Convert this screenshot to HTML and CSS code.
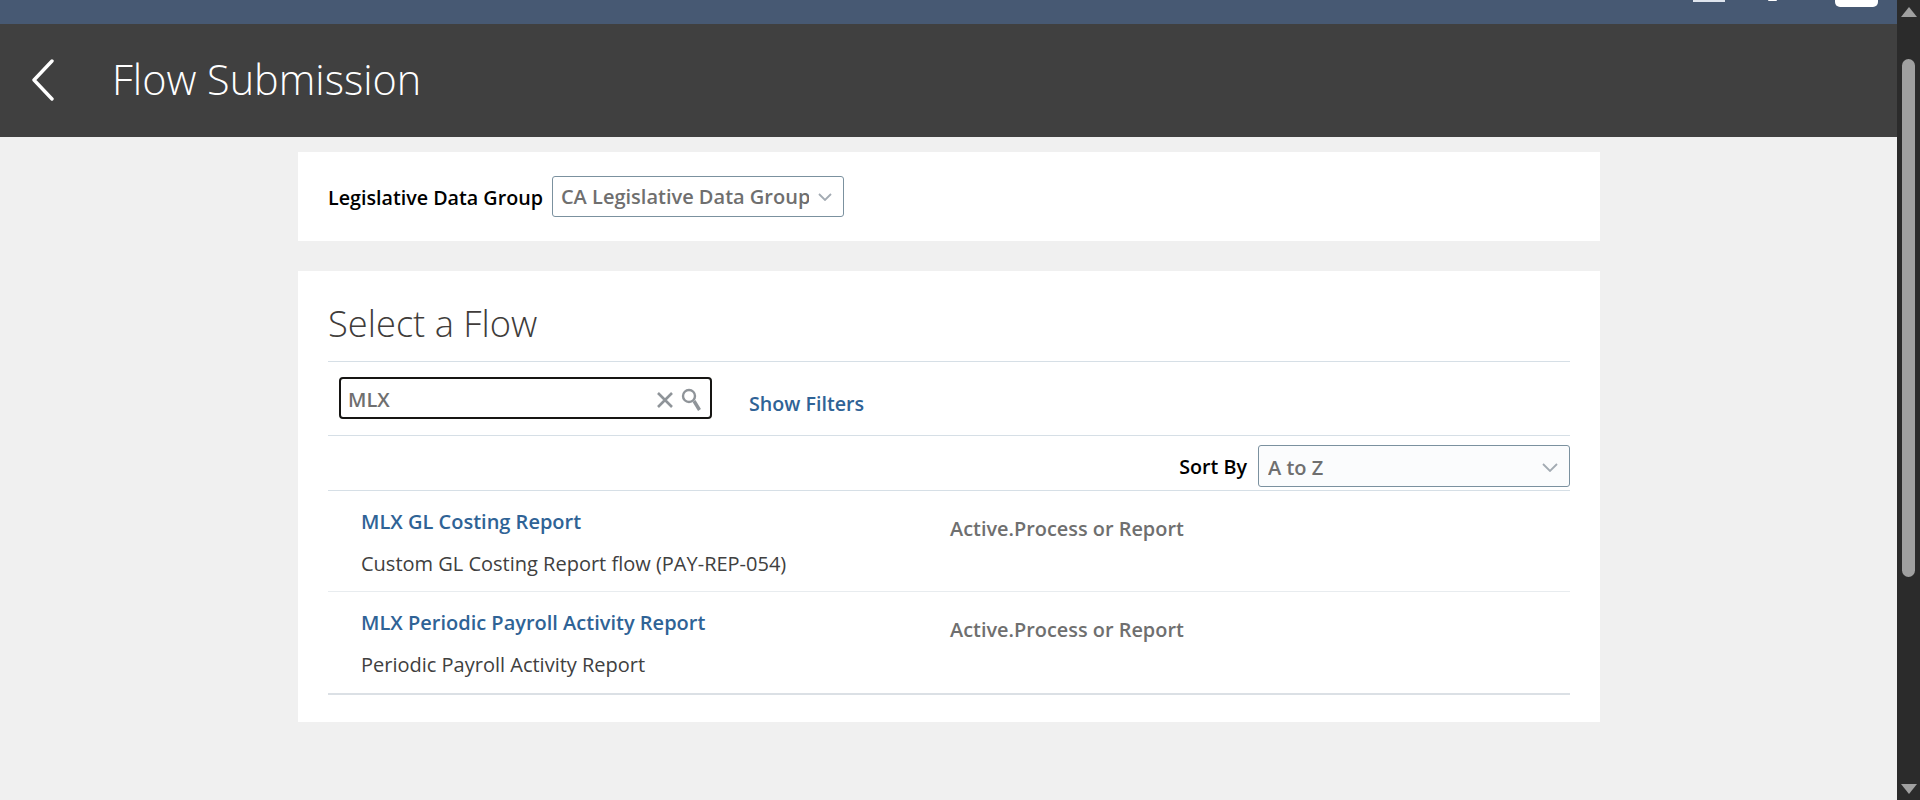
FILE: index.html
```html
<!DOCTYPE html>
<html lang="en">
<head>
    <meta charset="UTF-8">
    <title>Flow Submission</title>
    <link rel="stylesheet" href="styles.css">
</head>
<body>
    <div class="page">
        <div class="content">
            <div class="topbar">
                <span class="top-tab"></span>
                <span class="top-dot"></span>
                <span class="top-btn"></span>
            </div>

            <header class="title-bar">
                <svg class="back-icon" width="24" height="42" viewBox="0 0 24 42">
                    <path d="M21 2 L3 21 L21 40" fill="none" stroke="#fff" stroke-width="3.4" stroke-linecap="round" stroke-linejoin="round"/>
                </svg>
                <h1>Flow Submission</h1>
            </header>

            <main>
                <section class="card ldg-card">
                    <label class="field-label">Legislative Data Group</label>
                    <div class="select ldg-select">
                        <span class="select-text">CA Legislative Data Group</span>
                        <svg class="chevron" width="14" height="8" viewBox="0 0 14 8"><path d="M1 1 L7 7 L13 1" fill="none" stroke="#a3abb3" stroke-width="1.8"/></svg>
                    </div>
                </section>

                <section class="card flow-card">
                    <h2>Select a Flow</h2>

                    <div class="search-row">
                        <div class="search-box">
                            <span class="search-text">MLX</span>
                            <svg class="clear-icon" width="18" height="18" viewBox="0 0 18 18"><path d="M2 2 L16 16 M16 2 L2 16" stroke="#8f9499" stroke-width="2.6"/></svg>
                            <svg class="search-icon" width="20" height="26" viewBox="0 0 20 26">
                                <circle cx="8" cy="8" r="6" fill="none" stroke="#8f9499" stroke-width="2.4"/>
                                <path d="M13 13 L18.5 22" stroke="#8f9499" stroke-width="3.4"/>
                            </svg>
                        </div>
                        <a class="filters-link" href="#">Show Filters</a>
                    </div>

                    <div class="sort-row">
                        <label class="field-label sort-label">Sort By</label>
                        <div class="select sort-select">
                            <span class="select-text">A to Z</span>
                            <svg class="chevron" width="16" height="9" viewBox="0 0 16 9"><path d="M1 1 L8 8 L15 1" fill="none" stroke="#a3abb3" stroke-width="1.8"/></svg>
                        </div>
                    </div>

                    <div class="flow-row">
                        <div class="flow-main">
                            <a class="flow-name" href="#">MLX GL Costing Report</a>
                            <p class="flow-desc">Custom GL Costing Report flow (PAY-REP-054)</p>
                        </div>
                        <div class="flow-status">Active.Process or Report</div>
                    </div>

                    <div class="flow-row last">
                        <div class="flow-main">
                            <a class="flow-name" href="#">MLX Periodic Payroll Activity Report</a>
                            <p class="flow-desc">Periodic Payroll Activity Report</p>
                        </div>
                        <div class="flow-status">Active.Process or Report</div>
                    </div>
                </section>
            </main>
        </div>

        <div class="scrollbar">
            <span class="arrow-up"></span>
            <span class="thumb"></span>
            <span class="arrow-down"></span>
        </div>
    </div>
</body>
</html>
```

FILE: styles.css
```css
html, body {
    margin: 0;
    padding: 0;
    height: 800px;
    overflow: hidden;
}

body {
    font-family: "Open Sans", "Noto Sans", Arial, sans-serif;
    font-size: 20px;
    background-color: #f0f0f0;
}

.page {
    display: flex;
    height: 800px;
}

.content {
    flex: 1;
    min-width: 0;
}

.topbar {
    height: 24px;
    background: #475973;
    display: flex;
    align-items: flex-start;
}

.top-tab {
    width: 32px;
    height: 2px;
    margin-left: 1693px;
    background: #dfe5ee;
}

.top-dot {
    width: 9px;
    height: 1px;
    margin-left: 43px;
    background: #fff;
    border-radius: 0 0 6px 6px;
}

.top-btn {
    width: 43px;
    height: 7px;
    margin-left: 58px;
    background: #fff;
    border-radius: 0 0 5px 5px;
}

.title-bar {
    height: 113px;
    background: #404040;
    display: flex;
    align-items: center;
    padding-left: 31px;
}

.back-icon {
    margin: -2px 57px 0 0;
}

h1 {
    margin: -4px 0 0 0;
    color: #fff;
    font-size: 41.4px;
    font-weight: 300;
}

main {
    width: 1302px;
    margin-left: 298px;
    padding-top: 15px;
}

.card {
    background: #fff;
}

.ldg-card {
    height: 89px;
    padding: 24px 30px 0 30px;
    box-sizing: border-box;
    display: flex;
    align-items: flex-start;
    margin-bottom: 30px;
}

.field-label {
    color: #000;
    font-weight: 600;
    font-size: 19.7px;
    line-height: 43px;
}

.sort-label {
    line-height: 44px;
}

.select {
    box-sizing: border-box;
    display: flex;
    align-items: center;
    border: 1px solid #7b919f;
    border-radius: 3px;
    background: #fbfcfd;
    color: #6f6f6f;
    font-weight: 600;
}

.select-text {
    flex: 1;
    min-width: 0;
    white-space: nowrap;
    overflow: hidden;
}

.ldg-select {
    width: 292px;
    height: 41px;
    margin-left: 9px;
    padding: 0 11px 0 8px;
    background: #fff;
}

.chevron {
    flex: none;
    margin-left: 9px;
}

.flow-card {
    height: 451px;
    padding: 0 30px;
    box-sizing: border-box;
}

h2 {
    margin: 0;
    height: 91px;
    box-sizing: border-box;
    padding-top: 28px;
    border-bottom: 1px solid #d6dfe6;
    color: #403c3a;
    font-size: 36.3px;
    font-weight: 300;
    line-height: 48px;
}

.search-row {
    height: 74px;
    box-sizing: border-box;
    border-bottom: 1px solid #d6dfe6;
    display: flex;
    align-items: flex-start;
    padding: 15px 0 0 11px;
}

.search-box {
    box-sizing: border-box;
    width: 373px;
    height: 42px;
    border: 2px solid #161513;
    border-radius: 4px;
    display: flex;
    align-items: center;
    padding: 0 9px 0 7px;
    color: #6f6f6f;
    font-weight: 600;
}

.search-text {
    flex: 1;
    padding-top: 2px;
}

.clear-icon {
    margin: 3px 7px 0 0;
}

.search-icon {
    margin-top: 5px;
}

.filters-link {
    margin: 7px 0 0 37px;
    color: #2f6396;
    font-weight: 600;
    font-size: 19.7px;
    text-decoration: none;
    line-height: 40px;
}

.sort-row {
    height: 55px;
    box-sizing: border-box;
    border-bottom: 1px solid #d6dfe6;
    display: flex;
    justify-content: flex-end;
    align-items: flex-start;
    padding-top: 9px;
}

.sort-select {
    width: 312px;
    height: 42px;
    margin-left: 11px;
    padding: 2px 11px 0 9px;
}

.flow-row {
    height: 101px;
    box-sizing: border-box;
    border-bottom: 1px solid #e8ecef;
    display: flex;
    padding: 17px 0 0 33px;
}

.flow-row.last {
    height: 103px;
    border-bottom: 2px solid #dbe0e5;
}

.flow-main {
    width: 589px;
}

.flow-name {
    display: block;
    color: #2f6396;
    font-weight: 600;
    text-decoration: none;
    line-height: 28px;
}

.flow-desc {
    margin: 14px 0 0 0;
    color: #404040;
    line-height: 28px;
}

.flow-status {
    color: #6f6f6f;
    font-weight: 600;
    font-size: 19.9px;
    line-height: 28px;
    margin-top: 7px;
}

.scrollbar {
    width: 23px;
    background: #2b2b2b;
    display: flex;
    flex-direction: column;
    align-items: center;
}

.arrow-up {
    margin-top: 7px;
    border-left: 8px solid transparent;
    border-right: 8px solid transparent;
    border-bottom: 10px solid #a0a0a0;
}

.thumb {
    width: 13px;
    height: 518px;
    margin-top: 42px;
    background: #a0a0a0;
    border-radius: 7px;
}

.arrow-down {
    margin-top: auto;
    margin-bottom: 6px;
    border-left: 8px solid transparent;
    border-right: 8px solid transparent;
    border-top: 10px solid #a0a0a0;
}
```
